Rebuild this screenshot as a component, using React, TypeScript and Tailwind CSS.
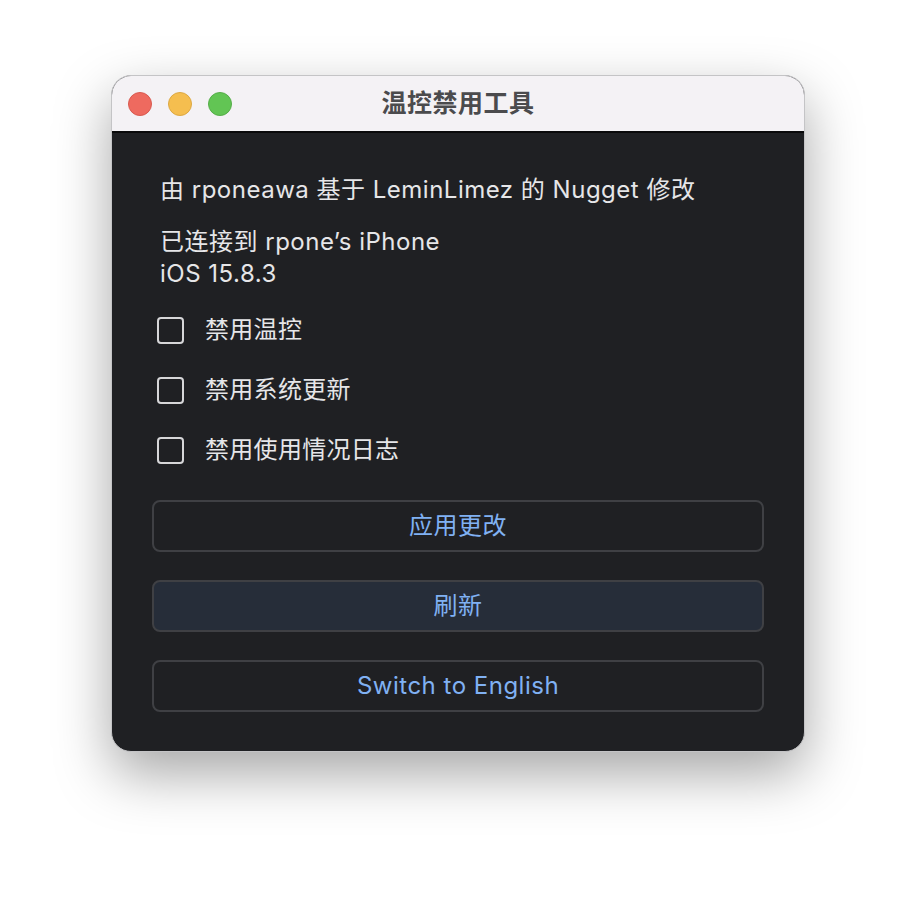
import React from "react";

const font = { fontFamily: 'Inter, "Noto Sans CJK SC", sans-serif' };

function Check({ label }: { label: string }) {
  return (
    <div className="flex items-center h-[30px]">
      <div className="w-[27px] h-[27px] rounded-[4px] border-[2.5px] border-[#d6d6d8] ml-[45px]" />
      <span className="ml-[21px] text-[24px] tracking-[0.3px] text-[#e6e6e8] leading-[30px]">{label}</span>
    </div>
  );
}

function Btn({ label, active }: { label: string; active?: boolean }) {
  return (
    <div
      className={
        "mx-[40px] h-[52px] rounded-[8px] border-2 border-[#3f4044] flex items-center justify-center text-[24px] tracking-[0.5px] text-[#80b1f3] " +
        (active ? "bg-[#262d39]" : "bg-[#1f2023]")
      }
    >
      {label}
    </div>
  );
}

export default function App() {
  return (
    <div className="w-[916px] h-[900px] bg-white pt-[75px]" style={font}>
      <div className="ml-[111px] w-[694px] h-[677px] rounded-[20px] overflow-hidden border border-[#c4c4c6] shadow-[0_22px_55px_rgba(0,0,0,0.35)] flex flex-col bg-[#1f2023]">
        <div className="relative h-[57px] bg-[#f4f2f5] border-b-2 border-[#0a0a0b] flex items-center shrink-0">
          <div className="flex gap-[16px] ml-[16px]">
            <div className="w-[24px] h-[24px] rounded-full bg-[#ee6a5f] border border-[#d85a50]" />
            <div className="w-[24px] h-[24px] rounded-full bg-[#f5be4f] border border-[#dca843]" />
            <div className="w-[24px] h-[24px] rounded-full bg-[#62c554] border border-[#55ad49]" />
          </div>
          <div className="absolute inset-0 flex items-center justify-center text-[25px] tracking-[0.5px] font-bold text-[#4b4b4d]">
            温控禁用工具
          </div>
        </div>
        <div className="flex flex-col text-[#e6e6e8] text-[24px] tracking-[0.5px]">
          <div className="mt-[41px] ml-[48px] leading-[32px]">由 rponeawa 基于 LeminLimez 的 Nugget 修改</div>
          <div className="mt-[20px] ml-[48px] leading-[32px]">已连接到 rpone’s iPhone</div>
          <div className="ml-[48px] leading-[32px]">iOS 15.8.3</div>
          <div className="mt-[25px] flex flex-col gap-[30px]">
            <Check label="禁用温控" />
            <Check label="禁用系统更新" />
            <Check label="禁用使用情况日志" />
          </div>
          <div className="mt-[35px] flex flex-col gap-[28px]">
            <Btn label="应用更改" />
            <Btn label="刷新" active />
            <Btn label="Switch to English" />
          </div>
        </div>
      </div>
    </div>
  );
}
